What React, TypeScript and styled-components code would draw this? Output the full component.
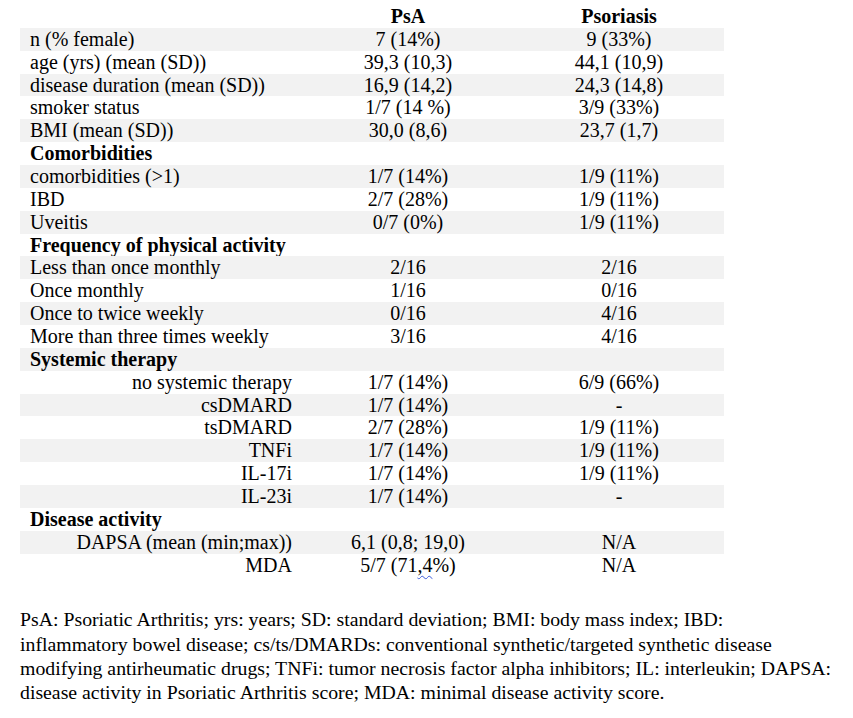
import React from "react";
import styled, { createGlobalStyle } from "styled-components";

const Global = createGlobalStyle`
  html, body { margin: 0; padding: 0; background: #ffffff; }
  body { font-family: "Liberation Serif", "Times New Roman", serif; color: #000; }
`;

const Page = styled.div`
  padding: 5px 0 0 20px;
  width: 830px;
`;

const Table = styled.div`
  display: grid;
  grid-template-columns: 282px 212px 210px;
  width: 704px;
  font-size: 20px;
  line-height: 22.86px;
`;

const Row = styled.div<{ $shaded: boolean }>`
  display: contents;
  & > div {
    background: ${(p) => (p.$shaded ? "#f2f2f2" : "transparent")};
    height: 22.86px;
  }
`;

const Label = styled.div<{ $align: "left" | "right"; $bold?: boolean }>`
  padding: 0 10px;
  text-align: ${(p) => p.$align};
  font-weight: ${(p) => (p.$bold ? 700 : 400)};
  white-space: nowrap;
`;

const Value = styled.div<{ $bold?: boolean }>`
  text-align: center;
  white-space: pre;
  font-weight: ${(p) => (p.$bold ? 700 : 400)};
`;

const Squiggle = styled.span`
  text-decoration: underline wavy #3b5bdb;
  text-decoration-thickness: 1px;
  text-underline-offset: 3px;
`;

const Footnote = styled.p`
  margin: 31px 0 0 0;
  font-size: 19.8px;
  line-height: 24.3px;
  white-space: nowrap;
`;

type R = {
  label: string;
  a?: React.ReactNode;
  b?: React.ReactNode;
  kind?: "section" | "indent";
};

const rows: R[] = [
  { label: "n (% female)", a: "7 (14%)", b: "9 (33%)" },
  { label: "age (yrs) (mean (SD))", a: "39,3 (10,3)", b: "44,1 (10,9)" },
  { label: "disease duration (mean (SD))", a: "16,9 (14,2)", b: "24,3 (14,8)" },
  { label: "smoker status", a: "1/7 (14 %)", b: "3/9 (33%)" },
  { label: "BMI (mean (SD))", a: "30,0 (8,6)", b: "23,7 (1,7)" },
  { label: "Comorbidities", kind: "section" },
  { label: "comorbidities (>1)", a: "1/7 (14%)", b: "1/9 (11%)" },
  { label: "IBD", a: "2/7 (28%)", b: "1/9 (11%)" },
  { label: "Uveitis", a: "0/7 (0%)", b: "1/9 (11%)" },
  { label: "Frequency of physical activity", kind: "section" },
  { label: "Less than once monthly", a: "2/16", b: "2/16" },
  { label: "Once monthly", a: "1/16", b: "0/16" },
  { label: "Once to twice weekly", a: "0/16", b: "4/16" },
  { label: "More than three times weekly", a: "3/16", b: "4/16" },
  { label: "Systemic therapy", kind: "section" },
  { label: "no systemic therapy", a: "1/7 (14%)", b: "6/9 (66%)", kind: "indent" },
  { label: "csDMARD", a: "1/7 (14%)", b: "-", kind: "indent" },
  { label: "tsDMARD", a: "2/7 (28%)", b: "1/9 (11%)", kind: "indent" },
  { label: "TNFi", a: "1/7 (14%)", b: "1/9 (11%)", kind: "indent" },
  { label: "IL-17i", a: "1/7 (14%)", b: "1/9 (11%)", kind: "indent" },
  { label: "IL-23i", a: "1/7 (14%)", b: "-", kind: "indent" },
  { label: "Disease activity", kind: "section" },
  { label: "DAPSA (mean (min;max))", a: "6,1 (0,8; 19,0)", b: "N/A", kind: "indent" },
  {
    label: "MDA",
    a: (
      <>
        5/7 (71<Squiggle>,4</Squiggle>%)
      </>
    ),
    b: "N/A",
    kind: "indent",
  },
];

export default function App() {
  return (
    <>
      <Global />
      <Page>
        <Table>
          <Row $shaded={false}>
            <Label $align="left" />
            <Value $bold>PsA</Value>
            <Value $bold>Psoriasis</Value>
          </Row>
          {rows.map((r, i) => (
            <Row key={r.label} $shaded={i % 2 === 0}>
              <Label
                $align={r.kind === "indent" ? "right" : "left"}
                $bold={r.kind === "section"}
              >
                {r.label}
              </Label>
              <Value>{r.a}</Value>
              <Value>{r.b}</Value>
            </Row>
          ))}
        </Table>
        <Footnote>
          PsA: Psoriatic Arthritis; yrs: years; SD: standard deviation; BMI: body mass index; IBD:
          <br />
          inflammatory bowel disease; cs/ts/DMARDs: conventional synthetic/targeted synthetic disease
          <br />
          modifying antirheumatic drugs; TNFi: tumor necrosis factor alpha inhibitors; IL: interleukin; DAPSA:
          <br />
          disease activity in Psoriatic Arthritis score; MDA: minimal disease activity score.
        </Footnote>
      </Page>
    </>
  );
}
